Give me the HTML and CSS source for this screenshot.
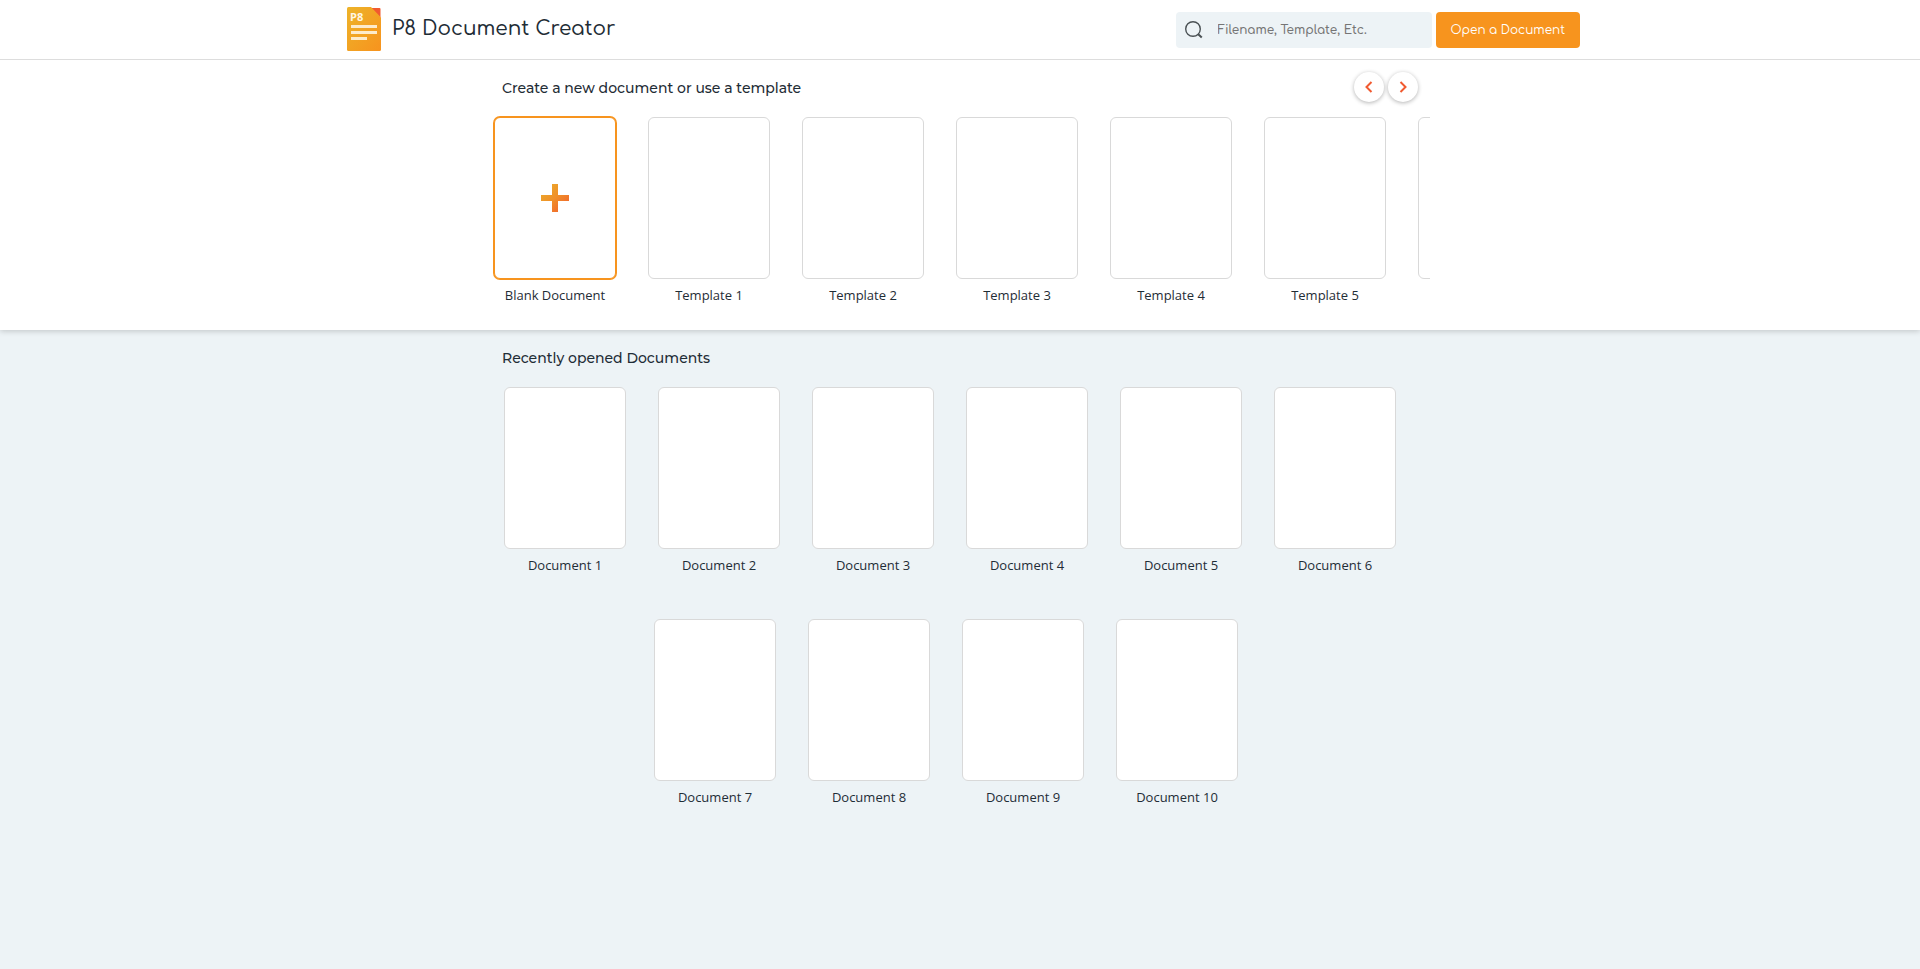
FILE: index.html
```html
<!DOCTYPE html>
<html lang="en">
<head>
<meta charset="utf-8">
<meta name="viewport" content="width=device-width, initial-scale=1">
<title>P8 Document Creator</title>
<link rel="stylesheet" href="styles.css">
</head>
<body>
<header class="topbar">
  <div class="topbar-inner">
    <svg class="logo" viewBox="0 0 34 44" width="34" height="44" role="img" aria-label="P8">
      <defs>
        <linearGradient id="logo-fill" x1="0" y1="0" x2="1" y2="1">
          <stop offset="0" stop-color="#edb329"/>
          <stop offset="1" stop-color="#f7931e"/>
        </linearGradient>
      </defs>
      <path d="M1 1H32.500Q33.500 1 33.500 2V11L23 1Z" fill="#f15a30"/>
      <path d="M1.500 0H24L34 10.500V42.500Q34 44 32.500 44H1.500Q0 44 0 42.500V1.500Q0 0 1.500 0Z" fill="url(#logo-fill)"/>
      <text class="logo-text" x="3" y="14">P8</text>
      <path d="M4 18h26v3H4zM4 24h26v3H4zM4 30h16v3H4z" fill="#fdebcb"/>
    </svg>
    <h1 class="brand">P8 Document Creator</h1>
    <form class="search" role="search">
      <label class="search-label" for="search">
        <svg width="18" height="18" viewBox="0 0 18 18" fill="none" stroke="#4a5154" aria-label="Search">
          <circle cx="8" cy="8" r="7.300" stroke-width="1.400"/>
          <path d="M13.200 13.200L16.800 16.500" stroke-width="2"/>
        </svg>
      </label>
      <input class="search-input" id="search" type="text" placeholder="Filename, Template, Etc.">
    </form>
    <button class="open-button" type="button">Open a Document</button>
  </div>
</header>
<main>
  <section class="templates">
    <div class="container">
      <div class="section-head">
        <h2 class="section-title">Create a new document or use a template</h2>
        <div class="nav">
          <button class="nav-button" type="button" aria-label="Previous">
            <svg width="8" height="12" viewBox="0 0 8 12" fill="none" stroke="#f15a30" stroke-width="2"><path d="M6.500 1L1.500 6L6.500 11"/></svg>
          </button>
          <button class="nav-button" type="button" aria-label="Next">
            <svg width="8" height="12" viewBox="0 0 8 12" fill="none" stroke="#f15a30" stroke-width="2"><path d="M1.500 1L6.500 6L1.500 11"/></svg>
          </button>
        </div>
      </div>
      <ul class="row template-row">
        <li class="item">
          <button class="item-button" type="button">
            <span class="page page-blank">
              <svg width="28" height="28" viewBox="0 0 28 28" aria-hidden="true">
                <defs>
                  <linearGradient id="plus-fill" x1="0" y1="0" x2="1" y2="1">
                    <stop offset="0" stop-color="#eab02c"/>
                    <stop offset="0.500" stop-color="#f08f28"/>
                    <stop offset="1" stop-color="#f15a30"/>
                  </linearGradient>
                </defs>
                <path d="M11 0h6v11h11v6H17v11h-6V17H0v-6h11z" fill="url(#plus-fill)"/>
              </svg>
            </span>
            <span class="item-label">Blank Document</span>
          </button>
        </li>
        <li class="item"><button class="item-button" type="button"><span class="page"></span><span class="item-label">Template 1</span></button></li>
        <li class="item"><button class="item-button" type="button"><span class="page"></span><span class="item-label">Template 2</span></button></li>
        <li class="item"><button class="item-button" type="button"><span class="page"></span><span class="item-label">Template 3</span></button></li>
        <li class="item"><button class="item-button" type="button"><span class="page"></span><span class="item-label">Template 4</span></button></li>
        <li class="item"><button class="item-button" type="button"><span class="page"></span><span class="item-label">Template 5</span></button></li>
        <li class="item"><button class="item-button" type="button" aria-label="Next template"><span class="page"></span></button></li>
      </ul>
    </div>
  </section>
  <section class="recent">
    <div class="container">
      <div class="section-head">
        <h2 class="section-title">Recently opened Documents</h2>
      </div>
      <ul class="row document-row">
        <li class="item"><button class="item-button" type="button"><span class="page"></span><span class="item-label">Document 1</span></button></li>
        <li class="item"><button class="item-button" type="button"><span class="page"></span><span class="item-label">Document 2</span></button></li>
        <li class="item"><button class="item-button" type="button"><span class="page"></span><span class="item-label">Document 3</span></button></li>
        <li class="item"><button class="item-button" type="button"><span class="page"></span><span class="item-label">Document 4</span></button></li>
        <li class="item"><button class="item-button" type="button"><span class="page"></span><span class="item-label">Document 5</span></button></li>
        <li class="item"><button class="item-button" type="button"><span class="page"></span><span class="item-label">Document 6</span></button></li>
      </ul>
      <ul class="row document-row document-row-last">
        <li class="item"><button class="item-button" type="button"><span class="page"></span><span class="item-label">Document 7</span></button></li>
        <li class="item"><button class="item-button" type="button"><span class="page"></span><span class="item-label">Document 8</span></button></li>
        <li class="item"><button class="item-button" type="button"><span class="page"></span><span class="item-label">Document 9</span></button></li>
        <li class="item"><button class="item-button" type="button"><span class="page"></span><span class="item-label">Document 10</span></button></li>
      </ul>
    </div>
  </section>
</main>
</body>
</html>
```
FILE: styles.css
```css
* {
  box-sizing: border-box;
}

body {
  margin: 0;
  background: #edf3f6;
  color: #1f2d36;
  font-family: "Open Sans", sans-serif;
  font-size: 13px;
}

button,
input {
  font: inherit;
  color: inherit;
  border: 0;
  padding: 0;
  background: none;
}

button {
  cursor: pointer;
}

.topbar {
  position: relative;
  z-index: 1;
  background: #fff;
  border-bottom: 1px solid #ddd;
}

.topbar-inner {
  display: flex;
  align-items: center;
  max-width: 1240px;
  min-height: 59px;
  margin: 0 auto;
  padding-left: 7px;
}

.logo {
  flex: none;
  margin-bottom: 2px;
}

.logo-text {
  font: 700 11px "Open Sans", sans-serif;
  fill: #fff6e2;
}

.brand {
  flex: 1;
  margin: 0;
  padding: 0 0 2px 11px;
  font-family: Comfortaa, Lato, sans-serif;
  font-size: 20px;
  font-weight: 500;
  line-height: 28px;
}

.search {
  display: flex;
  align-items: center;
  width: 256px;
  height: 36px;
  margin-right: 4px;
  border-radius: 4px;
  background: #edf3f6;
}

.search-label {
  display: flex;
  padding: 0 15px 0 9px;
}

.search-input {
  flex: 1;
  min-width: 0;
  height: 36px;
  outline: 0;
  font-family: Comfortaa, Lato, sans-serif;
  font-size: 12px;
  font-weight: 600;
}

.search-input::placeholder {
  color: #757575;
  opacity: 1;
}

.open-button {
  height: 36px;
  padding: 0 15px;
  border-radius: 4px;
  background: #f7941e;
  color: #fff;
  font-family: Comfortaa, Lato, sans-serif;
  font-size: 12px;
}

.container {
  max-width: 940px;
  margin: 0 auto;
}

.templates {
  position: relative;
  padding: 12px 0 25px;
  background: #fff;
  box-shadow: 0 1px 6px rgba(0, 0, 0, 0.2);
}

.recent {
  padding: 12px 0 25px;
}

.section-head {
  display: flex;
  align-items: center;
  justify-content: space-between;
  min-height: 30px;
  padding: 0 12px;
}

.section-title {
  margin: 0;
  padding-top: 2px;
  font-family: Montserrat, Inter, sans-serif;
  font-size: 14px;
  font-weight: 500;
  line-height: 20px;
}

.nav {
  display: flex;
  gap: 4px;
}

.nav-button {
  display: flex;
  align-items: center;
  justify-content: center;
  width: 30px;
  height: 30px;
  border-radius: 50%;
  background: #fff;
  box-shadow: 0 1px 4px rgba(0, 0, 0, 0.3);
}

.row {
  display: flex;
  gap: 32px;
  margin: 0;
  padding: 15px 0 0;
  list-style: none;
}

.template-row {
  padding-left: 4px;
  overflow: hidden;
}

.document-row {
  justify-content: center;
  padding-right: 20px;
}

.document-row-last {
  padding-top: 44px;
  padding-right: 28px;
}

.item {
  flex: none;
}

.item-button {
  display: flex;
  flex-direction: column;
  gap: 6px;
  width: 122px;
}

.page {
  display: flex;
  align-items: center;
  justify-content: center;
  width: 122px;
  height: 162px;
  border: 1px solid #d9d9d9;
  border-radius: 6px;
  background: #fff;
}

.page-blank {
  border-color: #f7941e;
  box-shadow: 0 0 0 1px #f7941e;
}

.item-label {
  width: 100%;
  line-height: 20px;
  text-align: center;
}
```
